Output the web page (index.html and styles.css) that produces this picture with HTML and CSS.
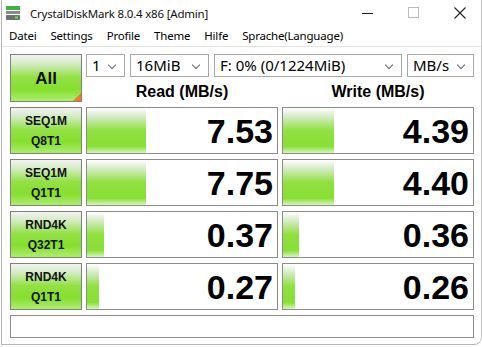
FILE: index.html
```html
<!DOCTYPE html>
<html>
    <head>
        <title>CrystalDiskMark 8.0.4 x86 [Admin]</title>
        <link rel="stylesheet" href="styles.css">
    </head>
<body>
<div class="window">
    <div class="titlebar">
        <svg class="app-icon" width="16" height="16" viewBox="0 0 16 16">
            <rect x="1" y="1" width="14" height="4" fill="#3cb043"/>
            <rect x="1" y="6" width="14" height="3" fill="#8a8a8a"/>
            <rect x="1" y="10" width="14" height="5" rx="1" fill="#6f6f6f"/>
            <rect x="10" y="11.5" width="3" height="2" fill="#6fe04a"/>
        </svg>
        <span class="title">CrystalDiskMark 8.0.4 x86 [Admin]</span>
        <div class="controls">
            <svg width="12" height="12" viewBox="0 0 12 12"><line x1="0" y1="6.5" x2="11" y2="6.5" stroke="#222" stroke-width="1"/></svg>
            <svg width="12" height="12" viewBox="0 0 12 12"><rect x="0.5" y="0.5" width="10" height="10" fill="none" stroke="#bbb" stroke-width="1"/></svg>
            <svg width="12" height="12" viewBox="0 0 12 12"><path d="M0.5 0.5 L11.5 11.5 M11.5 0.5 L0.5 11.5" stroke="#222" stroke-width="1.1"/></svg>
        </div>
    </div>
    <div class="menubar">
        <span>Datei</span>
        <span>Settings</span>
        <span>Profile</span>
        <span>Theme</span>
        <span>Hilfe</span>
        <span>Sprache(Language)</span>
    </div>

    <div class="content">
        <div class="btn btn-all">All<span class="corner"></span></div>
        <div class="selects">
            <div class="combo c-count">1</div>
            <div class="combo c-size">16MiB</div>
            <div class="combo c-drive">F: 0% (0/1224MiB)</div>
            <div class="combo c-unit">MB/s</div>
        </div>
        <div class="head">Read (MB/s)</div>
        <div class="head">Write (MB/s)</div>

        <div class="btn">SEQ1M<br>Q8T1</div>
        <div class="cell"><div class="bar" style="width: 59px"></div><span class="val">7.53</span></div>
        <div class="cell"><div class="bar" style="width: 51px"></div><span class="val">4.39</span></div>

        <div class="btn">SEQ1M<br>Q1T1</div>
        <div class="cell"><div class="bar" style="width: 59px"></div><span class="val">7.75</span></div>
        <div class="cell"><div class="bar" style="width: 51px"></div><span class="val">4.40</span></div>

        <div class="btn">RND4K<br>Q32T1</div>
        <div class="cell"><div class="bar" style="width: 17px"></div><span class="val">0.37</span></div>
        <div class="cell"><div class="bar" style="width: 16px"></div><span class="val">0.36</span></div>

        <div class="btn">RND4K<br>Q1T1</div>
        <div class="cell"><div class="bar" style="width: 12px"></div><span class="val">0.27</span></div>
        <div class="cell"><div class="bar" style="width: 12px"></div><span class="val">0.26</span></div>

        <div class="comment"></div>
    </div>
</div>
</body>
</html>
```

FILE: styles.css
```css
body {
  margin: 0;
  background-color: #fff;
  font-family: "Noto Sans", Arial, sans-serif;
  color: #000;
}

.window {
  width: 481px;
  height: 345px;
  margin-left: 1px;
  border-left: 1px solid #b5b5b5;
  border-bottom: 1px solid #b5b5b5;
  border-right: 1px solid #c8c8c8;
  border-bottom-right-radius: 8px;
  box-sizing: border-box;
  background-color: #fff;
}

.titlebar {
  height: 24px;
  display: flex;
  align-items: center;
}

.app-icon {
  margin-left: 3px;
  margin-top: 2px;
}

.title {
  font-size: 11.5px;
  letter-spacing: -0.2px;
  margin-left: 9px;
  padding-top: 2px;
  color: #111;
}

.controls {
  margin-left: auto;
  display: flex;
  gap: 34px;
  margin-right: 15px;
  margin-top: 2px;
}

.menubar {
  height: 22px;
  display: flex;
  align-items: center;
  gap: 14px;
  padding-left: 7px;
  font-size: 11.5px;
  letter-spacing: -0.2px;
  border-bottom: 1px solid #e3e3e3;
}

.content {
  display: grid;
  grid-template-columns: 72px 192px 192px;
  grid-template-rows: 23px 20px repeat(4, 47px) 23px;
  column-gap: 4px;
  row-gap: 5px;
  padding: 7px 0 0 8px;
}

.btn {
  border: 1px solid #808080;
  background: linear-gradient(to bottom, #f2f2f2 0%, #d2ebc0 20%, #93e145 48%, #86df2e 75%, #abee6e 100%);
  font-family: "Liberation Sans", Arial, sans-serif;
  font-weight: bold;
  font-size: 12px;
  line-height: 20px;
  text-align: center;
  color: #111;
  display: flex;
  align-items: center;
  justify-content: center;
  padding-top: 1px;
  box-sizing: border-box;
}

.btn-all {
  grid-row: 1 / 3;
  font-size: 17px;
  position: relative;
}

.corner {
  position: absolute;
  right: 0;
  bottom: 0;
  width: 0;
  height: 0;
  border-left: 8px solid transparent;
  border-bottom: 8px solid #ef7b22;
}

.selects {
  grid-column: 2 / 4;
  display: flex;
  gap: 5px;
}

.combo {
  border: 1px solid #a8a8a8;
  box-sizing: border-box;
  height: 23px;
  font-size: 15px;
  line-height: 21px;
  padding-left: 5px;
  position: relative;
}

.combo::after {
  content: "";
  position: absolute;
  right: 9px;
  top: 7px;
  width: 5px;
  height: 5px;
  border-right: 1px solid #666;
  border-bottom: 1px solid #666;
  transform: rotate(45deg);
}

.c-count { width: 39px; }
.c-size { width: 79px; }
.c-drive { width: 188px; }
.c-unit { width: 67px; }

.head {
  font-family: "Liberation Sans", Arial, sans-serif;
  font-weight: bold;
  font-size: 16px;
  text-align: center;
  line-height: 20px;
}

.cell {
  border: 1px solid #8c8c8c;
  display: flex;
  align-items: center;
  justify-content: flex-end;
  position: relative;
  box-sizing: border-box;
}

.bar {
  position: absolute;
  left: 0;
  top: 0;
  bottom: 0;
  background: linear-gradient(to bottom, #ffffff 0%, #d2ebc2 20%, #90e040 50%, #88df34 85%, #d8f5c0 100%);
}

.val {
  font-family: "Liberation Sans", Arial, sans-serif;
  font-weight: bold;
  font-size: 34px;
  margin-right: 4px;
  position: relative;
  padding-top: 1px;
}

.comment {
  grid-column: 1 / 4;
  border: 1px solid #8c8c8c;
  box-sizing: border-box;
}
```
